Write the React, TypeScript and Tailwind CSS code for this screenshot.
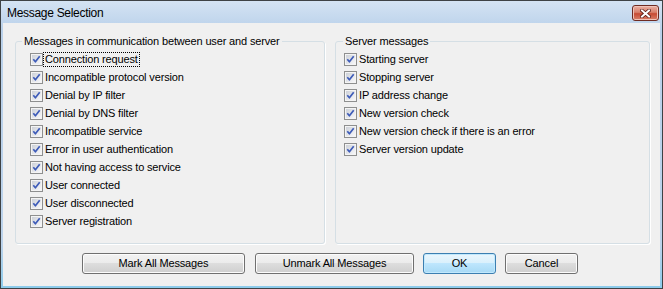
import React from "react";

const clientItems = [
  "Connection request",
  "Incompatible protocol version",
  "Denial by IP filter",
  "Denial by DNS filter",
  "Incompatible service",
  "Error in user authentication",
  "Not having access to service",
  "User connected",
  "User disconnected",
  "Server registration",
];

const serverItems = [
  "Starting server",
  "Stopping server",
  "IP address change",
  "New version check",
  "New version check if there is an error",
  "Server version update",
];

// Win7 style checkbox, always checked here
const CheckBox = () => (
  <svg width="13" height="13" viewBox="0 0 13 13" className="shrink-0">
    <defs>
      <linearGradient id="cbFill" x1="0" y1="0" x2="1" y2="1">
        <stop offset="0" stopColor="#cdd1d8" />
        <stop offset="1" stopColor="#f7f7f9" />
      </linearGradient>
    </defs>
    <rect x="0.5" y="0.5" width="12" height="12" fill="#f4f4f4" stroke="#8e8f8f" />
    <rect x="2" y="2" width="9" height="9" fill="url(#cbFill)" />
    <path d="M3.3 6.3 L5.4 8.8 L9.7 3.3" fill="none" stroke="#3d5bb8" strokeWidth="1.7" strokeLinejoin="round" />
  </svg>
);

const Item = ({ label, focused }: { label: string; focused?: boolean }) => (
  <div className="h-[18px] flex items-center">
    <CheckBox />
    <span
      className={`ml-0 px-[1px] leading-[13px] border ${
        focused ? "border-dotted border-black" : "border-transparent"
      }`}
    >
      {label}
    </span>
  </div>
);

const Group = ({ title, items, width, padLeft, legendLeft }: any) => (
  <fieldset
    className={`${width} h-[209px] border border-[#d5dfe5] rounded-[3px] shadow-[1px_1px_0_#ffffff] p-0 m-0`}
  >
    <legend className={`${legendLeft} px-[2px] leading-[13px]`}>{title}</legend>
    <div className={`${padLeft} pt-[2px] flex flex-col`}>
      {items.map((it: string, i: number) => (
        <Item key={it} label={it} focused={i === 0 && title.startsWith("Messages")} />
      ))}
    </div>
  </fieldset>
);

const Btn = ({ label, width, primary }: { label: string; width: string; primary?: boolean }) => (
  <button
    className={`${width} h-[21px] rounded-[3px] border text-[11px] text-black leading-none ${
      primary
        ? "border-[#3c7fb1] bg-[linear-gradient(#eaf6fd_0%,#d9f0fc_50%,#bee6fd_50%,#a7d9f5_100%)] shadow-[inset_0_0_0_1px_#c2e9fd]"
        : "border-[#707070] bg-[linear-gradient(#f2f2f2_0%,#ebebeb_50%,#dddddd_50%,#cfcfcf_100%)] shadow-[inset_0_0_0_1px_#fcfcfc]"
    }`}
  >
    {label}
  </button>
);

export default function App() {
  return (
    <div className="w-[663px] h-[289px] flex flex-col border border-[#3e4245] bg-[linear-gradient(#d4e3f3,#bad1ea_10%,#bcd3eb_85%,#8ccbeb)] font-['Liberation_Sans',Arial,sans-serif] text-[11px] tracking-[-0.15px] text-black select-none">
      {/* title bar */}
      <div className="h-[22px] flex items-start justify-between pl-[6px] pr-[3px]">
        <span className="pt-[5px] text-[12px] leading-[14px] tracking-[-0.3px] text-black">
          Message Selection
        </span>
        <div className="mt-[4px] w-[27px] h-[16px] rounded-[3px] border border-[#6e2b22] bg-[linear-gradient(#eab0a3_0%,#d8806c_45%,#c74a33_55%,#d9806a_100%)] shadow-[inset_0_0_0_1px_#f0c3b8] flex items-center justify-center">
          <svg width="11" height="9" viewBox="0 0 11 9">
            <path d="M2 1.5 L9 7.5 M9 1.5 L2 7.5" stroke="#5a1c14" strokeWidth="3.6" strokeLinecap="square" />
            <path d="M2 1.5 L9 7.5 M9 1.5 L2 7.5" stroke="#ffffff" strokeWidth="2" strokeLinecap="square" />
          </svg>
        </div>
      </div>

      {/* client area */}
      <div className="flex-1 mx-[2px] mb-[2px] bg-[#f0f0f0] flex flex-col">
        <div className="flex gap-[10px] pl-[12px] pt-[12px]">
          <Group
            title="Messages in communication between user and server"
            items={clientItems}
            width="w-[310px]"
            padLeft="pl-[14px]"
            legendLeft="ml-[6px]"
          />
          <Group
            title="Server messages"
            items={serverItems}
            width="w-[315px]"
            padLeft="pl-[8px]"
            legendLeft="ml-[7px]"
          />
        </div>

        <div className="flex items-center pl-[79px] mt-[9px]">
          <Btn label="Mark All Messages" width="w-[163px]" />
          <div className="w-[10px]" />
          <Btn label="Unmark All Messages" width="w-[159px]" />
          <div className="w-[9px]" />
          <Btn label="OK" width="w-[73px]" primary />
          <div className="w-[9px]" />
          <Btn label="Cancel" width="w-[73px]" />
        </div>
      </div>
    </div>
  );
}
